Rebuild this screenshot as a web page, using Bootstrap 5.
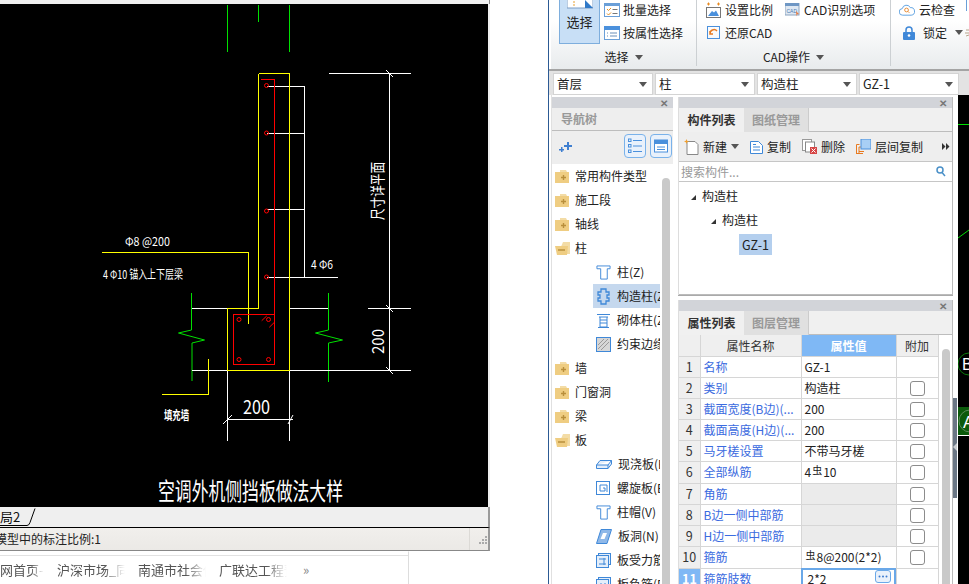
<!DOCTYPE html>
<html lang="zh-CN">
<head>
<meta charset="UTF-8">
<title>构造柱 - 属性列表</title>
<link rel="stylesheet" href="https://cdn.jsdelivr.net/npm/bootstrap@5.3.0/dist/css/bootstrap.min.css">
<style>
html, body { height: 584px; overflow: hidden; }
body { width: 969px; background: #fff; font: 12px/16px "Noto Sans CJK SC", "Liberation Sans", sans-serif; color: #222; }
svg { display: block; flex: none; }

/* left: cad window + browser bar */
.cad-col { width: 490px; flex: none; }
.cad-top { height: 4px; background: #efefef; border-right: 1px solid #888; }
.cad-view { background: #000; border-right: 2px solid #efefef; }
.cad-tabs { height: 21px; background: #efefef; border-bottom: 1px solid #000; border-right: 2px solid #9a9a9a; font-size: 13px; line-height: 20px; }
.cad-tab { width: 36px; height: 20px; }
.cad-status { height: 23px; background: linear-gradient(#f1efec, #ebe9e6); border-bottom: 1px solid #888; border-right: 2px solid #9a9a9a; font-size: 12px; line-height: 22px; }
.cad-status-text { margin-left: -5px; }
.cad-grip { width: 19px; border-left: 1px solid #dcdad6; }
.web-bar { width: 409px; height: 33px; border-top: 1px solid #fff; border-right: 1px solid #ddd; position: relative; font-size: 13px; line-height: 19px; color: #555; }
.web-line { height: 1px; background: #e2e2e2; margin: 3px 0 4px; }
.web-item { width: 68px; margin-right: 13px; white-space: nowrap; overflow: hidden; -webkit-mask-image: linear-gradient(90deg, #000 70%, transparent); mask-image: linear-gradient(90deg, #000 70%, transparent); }
.web-first { width: 44px; }
.web-more { color: #888; margin-left: 3px; }

/* right: application */
.gap-col { width: 58px; flex: none; }
.app-col { width: 421px; flex: none; border-left: 1px solid #2c5a94; background: #fff; }
.ribbon { height: 69px; background: linear-gradient(#fff 30%, #e8ebed); border-left: 2px solid #fff; overflow: hidden; }
.rb-group { border-right: 1px solid #ccd0d3; position: relative; height: 66px; flex: none; }
.rb-one { width: 146px; }
.rb-two { width: 194px; }
.rb-three { width: 70px; border-right: 0; }
.rb-big { width: 41px; height: 44px; margin-left: 8px; background: #c8dff6; border: 1px solid #7eaedd; border-top: 0; text-align: center; font-size: 13px; }
.rb-big svg { margin: 0 auto 5px; }
.rb-rows { margin-top: -2px; }
.rb-row { height: 23px; white-space: nowrap; gap: 4px; }
.rb-one .rb-row { gap: 3px; }
.rb-left-a { margin-left: 9px; }
.rb-left-b { margin-left: 12px; }
.rb-label { position: absolute; top: 49px; left: 0; right: 0; text-align: center; }
.rb-caret { display: inline-block; border: 4px solid transparent; border-top: 5px solid #555; border-bottom: 0; vertical-align: 2px; margin-left: 6px; }
.combo-bar { height: 26px; background: #e3e3e3; border-top: 2px solid #a4a4a4; padding: 2px 0 0 4px; gap: 2px; }
.combo-box { width: 100px; height: 22px; background: #fff; border: 1px solid #d4d4d4; padding: 0 5px 0 3px; line-height: 20px; font-size: 12.5px; }
.combo-box .rb-caret { margin: 0; vertical-align: 0; }

.work { height: 489px; background: #fff; }
.side-panel { width: 122px; margin-left: 2px; flex: none; border-left: 1px solid #e0e0e0; }
.mid-col { width: 275px; margin-left: 5px; flex: none; }
.pane-head { height: 11px; background: #d2d4d9; margin-top: 2px; color: #777; font-size: 10px; line-height: 11px; text-align: right; padding-right: 5px; font-weight: 700; }
.side-title { height: 23px; background: #eee; border-bottom: 1px solid #bdbdbd; padding: 3px 9px; color: #999; font-weight: 700; font-size: 12px; line-height: 16px; }
.side-tools { height: 33px; background: #eee; padding: 3px 1px 0 7px; }
.tool-btn { width: 22px; height: 24px; margin-left: 4px; border: 1px solid #7ab2ea; border-radius: 4px; background: #e9f1fb; padding: 3px; }
.side-tree { position: relative; height: 421px; overflow: hidden; }
.tree-row { height: 24px; line-height: 24px; white-space: nowrap; overflow: hidden; }
.tree-top { padding-left: 3px; gap: 6px; }
.fold-open { margin-right: -2px; }
.tree-sub { margin-left: 41px; padding-left: 3px; width: 67px; gap: 6px; }
.tree-sel { background: #c5d8ee; }
.tree-bar { position: absolute; left: 110px; top: 14px; bottom: 0; width: 8px; background: #c9c9c9; border-radius: 4px 4px 0 0; }

.mid-pane { border-right: 1px solid #bbb; border-left: 1px solid #ddd; }
.nav-tabs.pane-tabs { height: 24px; background: #f0f0f0; border-bottom: 1px solid #bdbdbd; }
.pane-tabs .nav-link { width: 65px; height: 24px; padding: 4px 0 0; text-align: center; font-weight: 700; color: #999; background: #e0e0e0; border: 0; border-right: 1px solid #ccc; border-radius: 0; font-size: 12px; line-height: 16px; margin: 0; }
.pane-tabs .nav-link.active { color: #333; background: #f0f0f0; border-right: 0; }
.list-tools { height: 30px; background: #eee; border-bottom: 1px solid #c6c6c6; padding: 0 2px 0 5px; }
.tool-item { gap: 4px; white-space: nowrap; }
.tool-item + .tool-item { margin-left: 11px; }
.search-row { height: 20px; border-bottom: 1px solid #c6c6c6; padding: 0 6px 0 2px; color: #999; line-height: 19px; }
.comp-tree { height: 113px; border-bottom: 1px solid #bbb; padding-top: 2px; }
.comp-row { height: 24px; line-height: 24px; gap: 6px; }
.comp-tri { width: 0; height: 0; border-left: 5px solid transparent; border-bottom: 5px solid #333; margin-top: 2px; }
.comp-sel { background: #b4cfee; padding: 0 3px; height: 21px; line-height: 21px; font-size: 12.5px; margin-left: 60px; }
.pane-split { height: 3px; border-top: 1px solid #aaa; }

.attr-wrap { height: 249px; overflow: hidden; position: relative; background: #fff; }
.attr-table { width: 259px; table-layout: fixed; margin: 0; border-collapse: collapse; }
.attr-table th, .attr-table td { height: 21px; padding: 0 3px; border: 1px solid #d6d6d6; border-left: 0; border-top: 0; font-size: 12px; line-height: 20px; font-weight: 400; white-space: nowrap; overflow: hidden; color: #222; box-shadow: none; }
.attr-table th { background: #efefef; text-align: center; color: #333; }
.attr-table .attr-num { background: #efefef; text-align: center; color: #333; font-size: 12.5px; }
.attr-table .attr-name { color: #3b6be0; padding-left: 3px; }
.attr-table .attr-off { background: #ebebeb; }
.attr-table .attr-on { background: #7fb8f5; color: #fff; font-weight: 700; }
.attr-table .attr-edit { outline: 2px solid #6aa8e8; outline-offset: -2px; padding-left: 6px; }
.attr-table .attr-check { text-align: center; padding: 0; }
.attr-check .form-check-input { width: 15px; height: 15px; margin: 3px 0 0; border: 1px solid #8c8c8c; border-radius: 3px; float: none; vertical-align: top; }
.more-btn { position: absolute; right: 61px; top: 235px; width: 16px; height: 13px; border: 1px solid #6aa8e8; border-radius: 3px; background: #e9f1fb; padding: 4px 2px 0; }
.rebar { font-size: 10px; position: relative; top: -3px; margin: 0 1px; }
.attr-bar { position: absolute; left: 263px; top: 14px; bottom: 0; width: 8px; background: #c9c9c9; border-radius: 4px 4px 0 0; }

.splitter { width: 5px; flex: none; }
.split-grip { position: absolute; left: 0; top: 303px; width: 4px; height: 100px; background: #6b7785; }
.split-arrow { position: absolute; left: 0; top: 45px; border: 4px solid transparent; border-right-color: #c8ccd0; border-left: 0; }
.right-view { width: 11px; flex: none; background: #000; overflow: hidden; }
.canvas-label { font-family: "Noto Sans CJK SC", "Liberation Sans", sans-serif; fill: #fff; }
</style>
</head>
<body class="d-flex">

<!-- svg bits used more than once -->
<svg width="0" height="0" class="position-absolute">
  <symbol id="fold-plus" viewBox="0 0 14 13"><path d="M5 0h6l1 2H5z" fill="#f3dca6"/><rect y="2" width="14" height="11" fill="#efcd82"/><path d="M6 7.5h5M8.5 5v5" stroke="#b98f3c" stroke-width="1.4"/></symbol>
  <symbol id="fold-minus" viewBox="0 0 16 13"><path d="M8 0h7v12H3z" fill="#f3dca6"/><path d="M0 4h13l-1 9H2z" fill="#efcd82"/><path d="M3 8h7" stroke="#b98f3c" stroke-width="1.5"/></symbol>
  <symbol id="col-t" viewBox="0 0 16 15"><path d="M1 .5h14v3h-3v11H5v-11H1z" fill="#fff" stroke="#3f88d8"/></symbol>
</svg>

<div class="cad-col d-flex flex-column">
  <div class="cad-top"></div>
  <div class="cad-view">
    <svg width="488" height="503" viewBox="0 4 488 503" shape-rendering="crispEdges" fill="none">
      <g stroke="#00e000"><path d="M227.5 5v47M258.5 5v17M289.5 5v47"/></g>
      <g stroke="#00e000" shape-rendering="auto"><path d="M191.5 293v37l-13 3 26 7-12.500 3v38M328.500 293v37l-13 3 27 7-14 3v39"/></g>
      <g stroke="#fff">
        <path d="M267 86.500h37.500V277M267 133.500h37.500M267 209.500h37.500M267 277.500h71"/>
        <path d="M329 73.500h82M389.500 73v297M368 308.500h43M192 370.500h219M192 308.500h35M290 308.500h38"/>
        <path d="M227.500 370v71M289.500 370v71M227 419.500h66"/>
      </g>
      <g stroke="#fff" shape-rendering="auto"><path d="M386 70l7 7M386 305l7 7M386 367l7 7M223 424l9-9M288 424l5-9"/></g>
      <g stroke="#ff0">
        <path d="M258.500 73.500h31V370.500H227.500V308.500h31V73.500"/>
        <path d="M102 252.500h146.500v71M208.500 359v35.500H162"/>
      </g>
      <g stroke="#f00">
        <path d="M261 79.500h13.500V314.500"/>
        <rect x="233.500" y="314.500" width="41" height="50"/>
      </g>
      <g stroke="#f00" shape-rendering="auto">
        <circle cx="266.500" cy="85.500" r="2"/><circle cx="266.500" cy="133" r="2"/><circle cx="266.500" cy="211" r="2"/><circle cx="266.500" cy="277" r="2"/>
        <circle cx="239" cy="319.500" r="2"/><circle cx="268.500" cy="319.500" r="2"/><circle cx="239" cy="359.500" r="2"/><circle cx="268.500" cy="359.500" r="2"/>
        <path d="M261.700 320.700l5-4.700M269.300 327.300l4.700-4.600"/>
      </g>
      <g class="canvas-label">
        <text x="125" y="246" font-size="12" textLength="45" lengthAdjust="spacingAndGlyphs">Φ8 @200</text>
        <text x="103" y="279" font-size="12" textLength="80" lengthAdjust="spacingAndGlyphs">4 Φ10 锚入上下层梁</text>
        <text x="311" y="269" font-size="12" textLength="22" lengthAdjust="spacingAndGlyphs">4 Φ6</text>
        <text x="164" y="420" font-size="12" font-weight="700" textLength="25" lengthAdjust="spacingAndGlyphs">填充墙</text>
        <text x="243" y="414" font-size="19" textLength="27" lengthAdjust="spacingAndGlyphs">200</text>
        <text transform="translate(384 354) rotate(-90)" font-size="16" textLength="25" lengthAdjust="spacingAndGlyphs">200</text>
        <text transform="translate(383 220) rotate(-90)" font-size="15" textLength="58" lengthAdjust="spacingAndGlyphs">尺寸详平面</text>
        <text x="158" y="500" font-size="24" textLength="185" lengthAdjust="spacingAndGlyphs">空调外机侧挡板做法大样</text>
      </g>
    </svg>
  </div>
  <div class="cad-tabs d-flex">
    <svg class="cad-tab" viewBox="0 0 36 20" fill="none"><path d="M0 18.500h27q2 0 3-3l5-14" stroke="#000"/><text x="0" y="15" font-size="13" fill="#111" stroke="none" font-family="Noto Sans CJK SC">局2</text></svg>
  </div>
  <div class="cad-status d-flex justify-content-between">
    <span class="cad-status-text">模型中的标注比例:1</span>
    <div class="cad-grip"><svg width="10" height="10" class="ms-auto mt-2" viewBox="0 0 10 10" fill="#aaa"><path d="M7 0h2v2H7zM4 3h2v2H4zM7 3h2v2H7zM1 6h2v2H1zM4 6h2v2H4zM7 6h2v2H7z"/></svg></div>
  </div>
  <div class="web-bar">
    <div class="web-line"></div>
    <div class="d-flex">
      <span class="web-item web-first">网首页-我</span>
      <span class="web-item">沪深市场_同花顺</span>
      <span class="web-item">南通市社会保险</span>
      <span class="web-item">广联达工程预算</span>
      <span class="web-more">»</span>
    </div>
  </div>
</div>

<div class="gap-col"></div>

<div class="app-col d-flex flex-column">
  <div class="ribbon d-flex">
    <div class="rb-group rb-one d-flex">
      <div class="rb-big">
        <svg width="26" height="9" viewBox="0 0 26 9"><rect x="0" y="-2" width="26" height="10" fill="#fff" stroke="#7a9cc4"/><path d="M18 8V0l8 8z" fill="#2f79c8"/><path d="M7 1v6" stroke="#e8a030" stroke-dasharray="2 1"/></svg>
        <div>选择</div>
      </div>
      <div class="ms-1 rb-rows">
        <div class="rb-row d-flex align-items-center"><svg width="16" height="14" viewBox="0 0 16 14"><rect x=".5" y=".5" width="15" height="13" fill="#fff" stroke="#6a9fd8"/><rect x=".5" y=".5" width="15" height="2.500" fill="#6a9fd8"/><path d="M3 6l1.500 1.500L7 5M3 10.500l1.500 1.500L7 9.500" stroke="#e89020" fill="none"/><path d="M8.500 6.500h5M8.500 10.500h5" stroke="#777"/></svg>批量选择</div>
        <div class="rb-row d-flex align-items-center"><svg width="16" height="14" viewBox="0 0 16 14"><rect x=".5" y=".5" width="15" height="13" fill="#fff" stroke="#6a9fd8"/><rect y="0" width="16" height="4" fill="#4a90dc"/><path d="M3 7h1M3 10h1M6 7h7M6 10h7" stroke="#6a8fb8"/></svg>按属性选择</div>
      </div>
      <div class="rb-label">选择<span class="rb-caret"></span></div>
    </div>
    <div class="rb-group rb-two d-flex">
      <div class="rb-left-a rb-rows">
        <div class="rb-row d-flex align-items-center"><svg width="15" height="16" viewBox="0 0 15 16"><path d="M1 2h3M11 2h3M2.500 .5v3M12.500 .5v3" stroke="#e88a20"/><rect x=".5" y="5.500" width="14" height="10" fill="#fff" stroke="#777"/><path d="M2 14l4-5 2 1.500 2-2 3 5.500z" fill="#4a90dc"/></svg>设置比例</div>
        <div class="rb-row d-flex align-items-center"><svg width="15" height="15" viewBox="0 0 15 15"><rect x="1.500" y="1.500" width="12" height="12" fill="none" stroke="#4a90dc"/><path d="M4 9a4 4 0 0 1 7-3M4 6v3h3" fill="none" stroke="#e87a20" stroke-width="1.500"/></svg>还原CAD</div>
      </div>
      <div class="rb-left-b rb-rows">
        <div class="rb-row d-flex align-items-center"><svg width="15" height="14" viewBox="0 0 15 14"><rect width="14" height="12" fill="#dfe8f2" stroke="#8aa4c0"/><rect width="14" height="3" fill="#6f97c4"/><text x="1.500" y="9.500" font-size="5" fill="#4a7ab0" font-family="Liberation Sans">CAD</text><path d="M11 8l3 3-2 .5-.5 2z" fill="#e87a40"/></svg>CAD识别选项</div>
      </div>
      <div class="rb-label">CAD操作<span class="rb-caret"></span></div>
    </div>
    <div class="rb-group rb-three d-flex">
      <div class="ms-2 rb-rows">
        <div class="rb-row d-flex align-items-center"><svg width="16" height="12" viewBox="0 0 17 12"><path d="M4 11.500a3.500 3.500 0 0 1-.5-7 4.500 4.500 0 0 1 8.500-1 4 4 0 0 1 1 8z" fill="#fff" stroke="#5a9fe0"/><circle cx="8" cy="6" r="2" fill="none" stroke="#e88a30"/><path d="M9.500 7.500l1.500 1.500" stroke="#e88a30"/></svg>云检查</div>
        <div class="rb-row d-flex align-items-center"><svg class="ms-1 me-1" width="12" height="14" viewBox="0 0 12 14"><path d="M3 6V4a3 3 0 0 1 6 0v2" fill="none" stroke="#3f88d8" stroke-width="1.500"/><rect y="6" width="12" height="8" rx="1" fill="#3f88d8"/><circle cx="6" cy="9.500" r="1.300" fill="#fff"/></svg>锁定<span class="rb-caret ms-1"></span></div>
      </div>
    </div>
    <svg class="ms-auto" width="8" height="40" viewBox="0 0 8 40" fill="none"><path d="M5.500 0v11" stroke="#6a9fd8"/><path d="M5 30h3M4 33h4M5 36l3-1" stroke="#b9a48c"/></svg>
  </div>

  <div class="combo-bar d-flex">
    <div class="combo-box d-flex justify-content-between align-items-center">首层<span class="rb-caret"></span></div>
    <div class="combo-box d-flex justify-content-between align-items-center">柱<span class="rb-caret"></span></div>
    <div class="combo-box d-flex justify-content-between align-items-center">构造柱<span class="rb-caret"></span></div>
    <div class="combo-box d-flex justify-content-between align-items-center">GZ-1<span class="rb-caret"></span></div>
  </div>

  <div class="work d-flex">
    <div class="side-panel">
      <div class="pane-head">✕</div>
      <div class="side-title">导航树</div>
      <div class="side-tools d-flex align-items-start">
        <svg class="mt-2" width="13" height="11" viewBox="0 0 13 11" fill="#3f7fd0"><path d="M8 0h2v3h3v2h-3v3H8V5H5V3h3zM2 5h1.500v2H5v1.500H3.500V10H2V8.500H0V7h2z"/></svg>
        <div class="ms-auto d-flex">
          <div class="tool-btn"><svg width="14" height="16" viewBox="0 0 14 16" fill="none" stroke="#4a90dc"><path d="M5 2.500h9M5 8h9M5 13.500h9"/><rect x=".5" y="1" width="2.500" height="2.500"/><rect x=".5" y="6.500" width="2.500" height="2.500"/><rect x=".5" y="12" width="2.500" height="2.500"/></svg></div>
          <div class="tool-btn"><svg width="14" height="16" viewBox="0 0 14 16"><rect x=".5" y="2" width="13" height="12" fill="#fff" stroke="#4a90dc"/><rect y="2" width="14" height="4" fill="#4a90dc"/><path d="M3 9h8M3 11.500h8" stroke="#4a90dc"/></svg></div>
        </div>
      </div>
      <div class="side-tree">
        <div class="tree-row tree-top d-flex align-items-center"><svg width="14" height="13"><use href="#fold-plus"/></svg>常用构件类型</div>
        <div class="tree-row tree-top d-flex align-items-center"><svg width="14" height="13"><use href="#fold-plus"/></svg>施工段</div>
        <div class="tree-row tree-top d-flex align-items-center"><svg width="14" height="13"><use href="#fold-plus"/></svg>轴线</div>
        <div class="tree-row tree-top d-flex align-items-center"><svg width="16" height="13" class="fold-open"><use href="#fold-minus"/></svg>柱</div>
        <div class="tree-row tree-sub d-flex align-items-center"><svg width="15" height="15"><use href="#col-t"/></svg>柱(Z)</div>
        <div class="tree-row tree-sub tree-sel d-flex align-items-center"><svg width="15" height="17" viewBox="0 0 15 17" fill="none" stroke="#3f88d8" stroke-width="1.300"><path d="M5 1h5v3h3v3h-2v3h2v3h-3v3H5v-3H2v-3h2V7H2V4h3z"/></svg>构造柱(Z)</div>
        <div class="tree-row tree-sub d-flex align-items-center"><svg width="15" height="15" viewBox="0 0 15 15" fill="none" stroke="#3f88d8"><path d="M1 1.500h13M3 4h9M4 4v10h7V4M4 7h7M4 10h7M2 14.500h11"/></svg>砌体柱(Z)</div>
        <div class="tree-row tree-sub d-flex align-items-center"><svg width="15" height="15" viewBox="0 0 15 15"><rect x=".5" y=".5" width="14" height="14" fill="#d6d6d6" stroke="#3f88d8"/><path d="M2 12L12 2M5 13l8-8M2 8l6-6" stroke="#999"/></svg>约束边缘柱</div>
        <div class="tree-row tree-top d-flex align-items-center"><svg width="14" height="13"><use href="#fold-plus"/></svg>墙</div>
        <div class="tree-row tree-top d-flex align-items-center"><svg width="14" height="13"><use href="#fold-plus"/></svg>门窗洞</div>
        <div class="tree-row tree-top d-flex align-items-center"><svg width="14" height="13"><use href="#fold-plus"/></svg>梁</div>
        <div class="tree-row tree-top d-flex align-items-center"><svg width="16" height="13" class="fold-open"><use href="#fold-minus"/></svg>板</div>
        <div class="tree-row tree-sub d-flex align-items-center"><svg width="16" height="9" viewBox="0 0 16 9" fill="#e4eefa" stroke="#3f88d8"><path d="M4 .5h11.500L12 5H.5zM.5 5v3.500H12L15.500 4V.5M12 5v3.500"/></svg>现浇板(B)</div>
        <div class="tree-row tree-sub d-flex align-items-center"><svg width="15" height="15" viewBox="0 0 15 15" fill="none" stroke="#3f88d8"><rect x=".5" y=".5" width="13" height="13"/><path d="M7 7h2v3H4V4h7v7"/></svg>螺旋板(B)</div>
        <div class="tree-row tree-sub d-flex align-items-center"><svg width="15" height="15"><use href="#col-t"/></svg>柱帽(V)</div>
        <div class="tree-row tree-sub d-flex align-items-center"><svg width="16" height="15" viewBox="0 0 16 15"><path d="M5 .5h10.500L11 14.500H.5z" fill="#8fb8e8" stroke="#3f88d8"/><path d="M7 4h4L8.500 10h-4z" fill="#fff"/></svg>板洞(N)</div>
        <div class="tree-row tree-sub d-flex align-items-center"><svg width="15" height="15" viewBox="0 0 15 15" fill="#e4eefa" stroke="#3f88d8"><rect x="2.500" y=".5" width="12" height="11"/><rect x=".5" y="2.500" width="12" height="12"/><path d="M3 6h7M3 11h7M8 5v7" fill="none"/></svg>板受力筋(S)</div>
        <div class="tree-row tree-sub d-flex align-items-center"><svg width="15" height="15" viewBox="0 0 15 15" fill="#e4eefa" stroke="#3f88d8"><rect x="2.500" y=".5" width="12" height="11"/><rect x=".5" y="2.500" width="12" height="12"/><path d="M5 6v4M9 6v4" fill="none"/></svg>板负筋(F)</div>
        <div class="tree-bar"></div>
      </div>
    </div>

    <div class="mid-col">
      <div class="mid-pane">
        <div class="pane-head">✕</div>
        <ul class="nav nav-tabs pane-tabs">
          <li class="nav-item"><a class="nav-link active" href="#">构件列表</a></li>
          <li class="nav-item"><a class="nav-link" href="#">图纸管理</a></li>
        </ul>
        <div class="list-tools d-flex align-items-center">
          <div class="tool-item d-flex align-items-center"><svg width="15" height="16" viewBox="0 0 15 16"><path d="M3 2.500h8l3 3v10H3z" fill="#fff" stroke="#888"/><path d="M2.500 0l.7 1.800L5 2.500l-1.800.7L2.500 5l-.7-1.800L0 2.500l1.800-.7z" fill="#f0a030"/></svg>新建<span class="rb-caret ms-0"></span></div>
          <div class="tool-item d-flex align-items-center"><svg width="13" height="15" viewBox="0 0 13 15" fill="#fff" stroke="#3f88d8"><path d="M.5 2.500h8l4 4v8H.5z"/><path d="M3 8h7M3 11h7M3 5.500h3" fill="none"/></svg>复制</div>
          <div class="tool-item d-flex align-items-center"><svg width="15" height="15" viewBox="0 0 15 15"><rect x=".5" y=".5" width="9" height="11" fill="#fff" stroke="#999"/><rect x="3.500" y="3" width="9" height="10" fill="#fff" stroke="#888"/><rect x="8" y="8" width="7" height="7" fill="#d64545"/><path d="M9.500 9.500l4 4M13.500 9.500l-4 4" stroke="#fff"/></svg>删除</div>
          <div class="tool-item d-flex align-items-center"><svg width="15" height="15" viewBox="0 0 15 15"><path d="M.5 15V5.500h3M3 15V8h2M.5 14.500H7M3 12.500h5" fill="none" stroke="#e87a20"/><rect x="5" y="0" width="10" height="10" fill="#a8cff5" stroke="#4a90dc"/></svg>层间复制</div>
          <svg class="ms-auto" width="8" height="7" viewBox="0 0 8 7" fill="#333"><path d="M0 0l3.500 3.500L0 7zM4 0l3.500 3.500L4 7z"/></svg>
        </div>
        <div class="search-row d-flex justify-content-between align-items-center">搜索构件...<svg width="10" height="11" viewBox="0 0 10 11" fill="none" stroke="#4a90c8" stroke-width="1.500"><circle cx="4" cy="4" r="3"/><path d="M6 6.500l3 3.500"/></svg></div>
        <div class="comp-tree">
          <div class="comp-row d-flex align-items-center ps-2 ms-1"><i class="comp-tri"></i><span>构造柱</span></div>
          <div class="comp-row d-flex align-items-center ms-4 ps-2"><i class="comp-tri"></i><span>构造柱</span></div>
          <div class="comp-row d-flex align-items-center"><span class="comp-sel">GZ-1</span></div>
        </div>
      </div>
      <div class="pane-split"></div>
      <div class="mid-pane">
        <div class="pane-head">✕</div>
        <ul class="nav nav-tabs pane-tabs">
          <li class="nav-item"><a class="nav-link active" href="#">属性列表</a></li>
          <li class="nav-item"><a class="nav-link" href="#">图层管理</a></li>
        </ul>
        <div class="attr-wrap">
          <table class="table attr-table">
            <colgroup><col style="width:21px"><col style="width:101px"><col style="width:95px"><col style="width:42px"></colgroup>
            <thead><tr><th></th><th>属性名称</th><th class="attr-on">属性值</th><th>附加</th></tr></thead>
            <tbody id="attrRows"></tbody>
          </table>
          <div class="more-btn"><svg width="10" height="3" viewBox="0 0 10 3" fill="#3b7bd0"><circle cx="1.500" cy="1.500" r="1"/><circle cx="5" cy="1.500" r="1"/><circle cx="8.500" cy="1.500" r="1"/></svg></div>
          <div class="attr-bar"></div>
        </div>
      </div>
    </div>

    <div class="splitter position-relative">
      <div class="split-grip"><div class="split-arrow"></div></div>
    </div>

    <div class="right-view">
      <svg width="11" height="489" viewBox="958 95 11 489" fill="none">
        <path d="M958 124.500h11M958 238l11-8" stroke="#00e000"/>
        <circle cx="969" cy="364" r="11" stroke="#0a7a0a"/>
        <text x="962" y="370" font-size="16" fill="#fff" font-family="Liberation Sans">B</text>
        <rect x="958" y="407" width="11" height="28" fill="#0b5a0b"/>
        <path d="M958 435.500h11" stroke="#fff"/>
        <circle cx="970" cy="421" r="11" stroke="#5a8a5a"/>
        <text x="963" y="428" font-size="17" fill="#fff" font-family="Liberation Sans">A</text>
      </svg>
    </div>
  </div>
</div>

<script>
  // 属性列表
  var filas = [
    ["名称", "GZ-1", false],
    ["类别", "构造柱", true],
    ["截面宽度(B边)(...", "200", true],
    ["截面高度(H边)(...", "200", true],
    ["马牙槎设置", "不带马牙槎", true],
    ["全部纵筋", '4<span class="rebar">虫</span>10', true],
    ["角筋", null, true],
    ["B边一侧中部筋", null, true],
    ["H边一侧中部筋", null, true],
    ["箍筋", '<span class="rebar">虫</span>8@200(2*2)', true],
    ["箍筋肢数", "2*2", false]
  ];
  var html = "";
  filas.forEach(function (f, i) {
    var actual = i === 10;
    html += '<tr><td class="attr-num' + (actual ? ' attr-on' : '') + '">' + (i + 1) + '</td>' +
      '<td class="attr-name">' + f[0] + '</td>' +
      '<td class="' + (f[1] === null ? 'attr-off' : '') + (actual ? ' attr-edit' : '') + '">' + (f[1] || '') + '</td>' +
      '<td class="attr-check">' + (f[2] ? '<input class="form-check-input" type="checkbox">' : '') + '</td></tr>';
  });
  document.getElementById("attrRows").innerHTML = html;
</script>
<script src="https://cdn.jsdelivr.net/npm/bootstrap@5.3.0/dist/js/bootstrap.bundle.min.js"></script>
</body>
</html>
